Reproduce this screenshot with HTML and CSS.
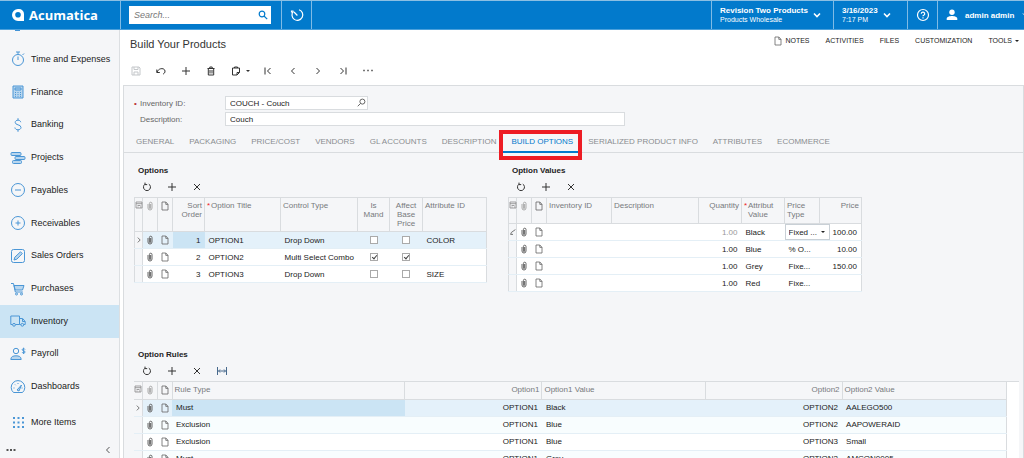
FILE: index.html
```
<!DOCTYPE html>
<html lang="en">
<head>
<meta charset="utf-8">
<title>Build Your Products</title>
<link rel="stylesheet" href="styles.css">
</head>
<body>
<svg class="sprite" aria-hidden="true">
  <symbol id="clip" viewBox="0 0 8 10"><path d="M2 3v4a2 2 0 0 0 4 0V2.500a1.300 1.300 0 0 0-2.600 0V7a.6.6 0 0 0 1.200 0V3"/></symbol>
  <symbol id="page" viewBox="0 0 8 10"><path d="M1 1h3.800L7 3.300V9H1zM4.800 1v2.400H7"/></symbol>
  <symbol id="files" viewBox="0 0 8 8"><path d="M1 1h6v6H1zM1 2.700h6M2.500 4.500h3M2.500 6h1M5 6h1"/></symbol>
  <symbol id="plus" viewBox="0 0 10 10"><path d="M5 1v8M1 5h8"/></symbol>
  <symbol id="cross" viewBox="0 0 10 10"><path d="M2 2l6 6M8 2l-6 6"/></symbol>
  <symbol id="refresh" viewBox="0 0 10 10"><path d="M3 2.200A3.500 3.500 0 1 0 6.800 2.100M3 .6v2h2.200"/></symbol>
  <symbol id="fit" viewBox="0 0 10 10"><path d="M.5 1v8M9.500 1v8M1.500 5h7M3 3.500L1.500 5 3 6.500M7 3.500L8.500 5 7 6.500"/></symbol>
  <symbol id="right" viewBox="0 0 10 10"><path d="M3.500 2l3 3-3 3"/></symbol>
  <symbol id="left" viewBox="0 0 10 10"><path d="M6.500 2l-3 3 3 3"/></symbol>
  <symbol id="down" viewBox="0 0 10 10"><path d="M2 3.500l3 3 3-3"/></symbol>
  <symbol id="lens" viewBox="0 0 10 10"><circle cx="4" cy="4" r="2.800"/><path d="M6 6l3.200 3.200"/></symbol>
</svg>

<header class="top">
  <a class="brand" href="#"><svg class="logo" viewBox="0 0 14 14"><path fill="#fff" fill-rule="evenodd" d="M7 1h1a5 5 0 0 1 5 5v7H7A6 6 0 0 1 7 1zM7 4a2.800 2.800 0 1 0 2.800 2.800A2.800 2.800 0 0 0 7 4z"/></svg>Acumatica</a>
  <div class="find"><input type="text" placeholder="Search..." aria-label="Search"><svg class="ic"><use href="#lens"/></svg></div>
  <button class="sq" aria-label="Recent"><svg viewBox="0 0 14 14"><path d="M3.500 3.200A5.400 5.400 0 1 0 9 1.800M4 4l3.400 3.500M1.500 4.500V3h2"/></svg></button>
  <span class="grow"></span>
  <button class="company"><span class="two"><b>Revision Two Products</b><span>Products Wholesale</span></span><svg class="ic"><use href="#down"/></svg></button>
  <button class="date"><span class="two"><b>3/16/2023</b><span>7:17 PM</span></span><svg class="ic"><use href="#down"/></svg></button>
  <button class="sq" aria-label="Help"><svg viewBox="0 0 14 14"><circle cx="7" cy="7" r="5.500"/><path d="M5.300 5.800a1.700 1.700 0 1 1 2.400 1.500q-.7.3-.7 1M7 9.300v1.100"/></svg></button>
  <button class="user"><svg viewBox="0 0 12 12"><circle cx="6" cy="3.300" r="2.700"/><path d="M.7 11V9.800C.7 7.800 3.500 7 6 7s5.300.8 5.300 2.800V11z"/></svg><b>admin admin</b><svg class="ic"><use href="#down"/></svg></button>
</header>

<div class="body">
<nav class="side">
  <i class="peek"></i>
  <div class="list">
    <a href="#"><svg viewBox="0 0 16 16"><circle cx="8" cy="9" r="5.500"/><path d="M8 9V5.500M8 3.500V1M6 1h4M12.500 4l1.500-1.500"/></svg>Time and Expenses</a>
    <a href="#"><svg viewBox="0 0 16 16"><path class="t" d="M3 2h10v12H3z"/><path d="M5 4h6v2H5zM5 8.500h1M7.500 8.500h1M10 8.500h1M5 10.500h1M7.500 10.500h1M10 10.500h1M5 12.300h1M7.500 12.300h1M10 12.300h1"/></svg>Finance</a>
    <a href="#"><svg viewBox="0 0 16 16"><path d="M10.800 5.200C10.500 3.800 9.300 3.200 8 3.200 6.400 3.200 5.200 4 5.200 5.400c0 3.200 5.800 1.700 5.800 5 0 1.500-1.300 2.400-3 2.400-1.600 0-2.900-.8-3.100-2.300M8 1.200v2M8 12.800v2"/></svg>Banking</a>
    <a href="#"><svg viewBox="0 0 16 16"><rect class="t" x="1" y="2.500" width="10" height="3" rx="1"/><rect class="t" x="5" y="6.500" width="10" height="3" rx="1"/><rect class="t" x="2.500" y="10.500" width="9" height="3" rx="1"/></svg>Projects</a>
    <a href="#"><svg viewBox="0 0 16 16"><circle cx="8" cy="8" r="6.500"/><path d="M5 8h6"/></svg>Payables</a>
    <a href="#"><svg viewBox="0 0 16 16"><circle cx="8" cy="8" r="6.500"/><path d="M5.500 8h5M8 5.500v5"/></svg>Receivables</a>
    <a href="#"><svg viewBox="0 0 16 16"><rect x="1.500" y="1.500" width="13" height="13" rx="2"/><path class="t" d="M4 12l.8-2.800L10.500 3.800l1.800 1.800L6.800 11.200z"/></svg>Sales Orders</a>
    <a href="#"><svg viewBox="0 0 16 16"><path class="t" d="M4 4.500h10L12.500 9H5.200z"/><path d="M1 2.500h2.500L5.300 11h7.500"/><circle cx="6.500" cy="13" r="1"/><circle cx="11.500" cy="13" r="1"/></svg>Purchases</a>
    <a href="#" class="on"><svg viewBox="0 0 16 16"><path d="M2.500 11.500H.8V3h8.700v8.500H5.500M9.500 5.500h3.200l2.500 3v3h-1.500M9.500 11.500h1.300M12.500 6v2.500H15"/><circle cx="4" cy="11.800" r="1.400"/><circle cx="12.300" cy="11.800" r="1.400"/></svg>Inventory</a>
    <a href="#"><svg viewBox="0 0 16 16"><circle cx="6" cy="5" r="2.700"/><path class="t" d="M.8 13.500c0-3 2.500-3.700 5.200-3.700s5.200.7 5.200 3.700z"/><path d="M15 3.500c-.5-1.200-2.800-1-2.800.2 0 1.500 2.900.8 2.900 2.300 0 1.300-2.500 1.500-3 .2M13.600 1.700v6.300"/></svg>Payroll</a>
    <a href="#"><svg viewBox="0 0 16 16"><path d="M3.500 13.500a6.800 6.800 0 1 1 9 0zM3.500 9h1M5 5.500l.7.7M8 4v1M12.500 9h-1"/><path class="t" d="M7 11l4.500-5L9 12z"/></svg>Dashboards</a>
  </div>
  <a href="#" class="more"><svg viewBox="0 0 16 16"><path class="dots" d="M3 3h2M7.500 3h2M12 3h2M3 7.500h2M7.500 7.500h2M12 7.500h2M3 12h2M7.500 12h2M12 12h2"/></svg>More Items</a>
  <div class="foot"><button aria-label="Menu options"><svg class="ic" viewBox="0 0 10 10"><path class="dots" d="M.5 5h2M4 5h2M7.500 5h2"/></svg></button><button aria-label="Collapse"><svg class="ic"><use href="#left"/></svg></button></div>
</nav>

<main>
  <div class="titlebar">
    <h1>Build Your Products</h1>
    <div class="links"><a href="#"><svg class="pg"><use href="#page"/></svg>NOTES</a><a href="#">ACTIVITIES</a><a href="#">FILES</a><a href="#">CUSTOMIZATION</a><a href="#">TOOLS<i class="caret"></i></a></div>
  </div>
  <div class="bar">
    <button disabled aria-label="Save"><svg class="ic" viewBox="0 0 10 10"><path d="M1 1h7l1 1v7H1zM3 1v2.500h4V1M3 9V6h4v3"/></svg></button>
    <button aria-label="Undo"><svg class="ic" viewBox="0 0 10 10"><path d="M.8 3.500v3h3M1 6.300C2.500 1.500 8.800 1.800 9 5c.1 1.600-.8 2.700-2 3"/></svg></button>
    <button aria-label="Add"><svg class="ic"><use href="#plus"/></svg></button>
    <button aria-label="Delete"><svg class="ic" viewBox="0 0 10 10"><path d="M1.500 2.500h7M3.800 2.200V1h2.400v1.200M2.300 2.500V9h5.400V2.500M4 4v3.500M6 4v3.500"/></svg></button>
    <button aria-label="Copy"><svg class="ic" viewBox="0 0 10 10"><path d="M1.500 2H8.500V6.500L6 9H1.500zM3.500 2V1h3v1M8.500 6.500H6V9"/></svg><i class="caret"></i></button>
    <span class="gap"></span>
    <button aria-label="First"><svg class="ic" viewBox="0 0 10 10"><path d="M2 1.500v7M7.500 2l-3 3 3 3"/></svg></button>
    <button aria-label="Previous"><svg class="ic"><use href="#left"/></svg></button>
    <button aria-label="Next"><svg class="ic"><use href="#right"/></svg></button>
    <button aria-label="Last"><svg class="ic" viewBox="0 0 10 10"><path d="M8 1.500v7M2.500 2l3 3-3 3"/></svg></button>
    <button aria-label="More"><svg class="ic" viewBox="0 0 10 10"><path class="dots" d="M0 4.500h2M4 4.500h2M8 4.500h2"/></svg></button>
  </div>

  <div class="panel">
    <form class="form">
      <label for="inv"><i class="req">•</i>Inventory ID:</label><span class="pick"><input id="inv" type="text" value="COUCH - Couch"><svg class="ic"><use href="#lens"/></svg></span>
      <label for="desc">Description:</label><input id="desc" type="text" value="Couch">
    </form>
    <div class="tabs">
      <button>GENERAL</button><button>PACKAGING</button><button>PRICE/COST</button><button>VENDORS</button><button>GL ACCOUNTS</button><button>DESCRIPTION</button><button class="on">BUILD OPTIONS</button><button>SERIALIZED PRODUCT INFO</button><button>ATTRIBUTES</button><button>ECOMMERCE</button>
    </div>

    <div class="pair">
      <section class="opts">
        <h2>Options</h2>
        <div class="tools"><button aria-label="Refresh"><svg class="ic"><use href="#refresh"/></svg></button><button aria-label="Add"><svg class="ic"><use href="#plus"/></svg></button><button aria-label="Delete"><svg class="ic"><use href="#cross"/></svg></button></div>
        <table>
          <colgroup><col class="c-sel"><col class="c-ic"><col class="c-ic"><col class="w32"><col class="w76"><col class="w77"><col class="w32"><col class="w33"><col></colgroup>
          <thead class="h3"><tr><th><svg class="fs"><use href="#files"/></svg></th><th><svg class="cl"><use href="#clip"/></svg></th><th><svg class="pg"><use href="#page"/></svg></th><th class="r">Sort<br>Order</th><th class="star">Option Title</th><th>Control Type</th><th class="m">Is<br>Mand</th><th class="m">Affect<br>Base<br>Price</th><th>Attribute ID</th></tr></thead>
          <tbody>
            <tr class="cur"><td><svg class="ar"><use href="#right"/></svg></td><td><svg class="cl"><use href="#clip"/></svg></td><td><svg class="pg"><use href="#page"/></svg></td><td class="r act">1</td><td>OPTION1</td><td>Drop Down</td><td class="m"><input type="checkbox" aria-label="Is mandatory"></td><td class="m"><input type="checkbox" aria-label="Affects base price"></td><td>COLOR</td></tr>
            <tr><td></td><td><svg class="cl"><use href="#clip"/></svg></td><td><svg class="pg"><use href="#page"/></svg></td><td class="r">2</td><td>OPTION2</td><td>Multi Select Combo</td><td class="m"><input type="checkbox" checked aria-label="Is mandatory"></td><td class="m"><input type="checkbox" checked aria-label="Affects base price"></td><td></td></tr>
            <tr><td></td><td><svg class="cl"><use href="#clip"/></svg></td><td><svg class="pg"><use href="#page"/></svg></td><td class="r">3</td><td>OPTION3</td><td>Drop Down</td><td class="m"><input type="checkbox" aria-label="Is mandatory"></td><td class="m"><input type="checkbox" aria-label="Affects base price"></td><td>SIZE</td></tr>
          </tbody>
        </table>
      </section>
      <section class="vals">
        <h2>Option Values</h2>
        <div class="tools"><button aria-label="Refresh"><svg class="ic"><use href="#refresh"/></svg></button><button aria-label="Add"><svg class="ic"><use href="#plus"/></svg></button><button aria-label="Delete"><svg class="ic"><use href="#cross"/></svg></button></div>
        <table>
          <colgroup><col class="c-sel"><col class="c-ic"><col class="c-ic"><col class="w65"><col class="w87"><col class="w43"><col class="w43"><col class="w35"><col></colgroup>
          <thead class="h2"><tr><th><svg class="fs"><use href="#files"/></svg></th><th><svg class="cl"><use href="#clip"/></svg></th><th><svg class="pg"><use href="#page"/></svg></th><th>Inventory ID</th><th>Description</th><th class="r">Quantity</th><th class="star">Attribut<br>Value</th><th>Price<br>Type</th><th class="r">Price</th></tr></thead>
          <tbody>
            <tr><td><svg class="ar" viewBox="0 0 10 10"><path d="M2 8l1-2.500L8 2M2 8h3"/></svg></td><td><svg class="cl"><use href="#clip"/></svg></td><td><svg class="pg"><use href="#page"/></svg></td><td></td><td></td><td class="r dim">1.00</td><td>Black</td><td class="edit"><span class="combo"><select aria-label="Price type"><option>Fixed ...</option></select><i class="caret"></i></span></td><td class="r">100.00</td></tr>
            <tr><td></td><td><svg class="cl"><use href="#clip"/></svg></td><td><svg class="pg"><use href="#page"/></svg></td><td></td><td></td><td class="r">1.00</td><td>Blue</td><td>% O...</td><td class="r">10.00</td></tr>
            <tr><td></td><td><svg class="cl"><use href="#clip"/></svg></td><td><svg class="pg"><use href="#page"/></svg></td><td></td><td></td><td class="r">1.00</td><td>Grey</td><td>Fixe...</td><td class="r">150.00</td></tr>
            <tr><td></td><td><svg class="cl"><use href="#clip"/></svg></td><td><svg class="pg"><use href="#page"/></svg></td><td></td><td></td><td class="r">1.00</td><td>Red</td><td>Fixe...</td><td></td></tr>
          </tbody>
        </table>
      </section>
    </div>

    <section class="rules">
      <h2>Option Rules</h2>
      <div class="tools"><button aria-label="Refresh"><svg class="ic"><use href="#refresh"/></svg></button><button aria-label="Add"><svg class="ic"><use href="#plus"/></svg></button><button aria-label="Delete"><svg class="ic"><use href="#cross"/></svg></button><button aria-label="Fit columns"><svg class="ic fit"><use href="#fit"/></svg></button></div>
      <div class="sheet">
        <table>
          <colgroup><col class="c-sel"><col class="c-ic"><col class="c-ic"><col class="p27"><col class="p16"><col class="p19"><col class="p16"><col></colgroup>
          <thead class="h1"><tr><th><svg class="fs"><use href="#files"/></svg></th><th><svg class="cl"><use href="#clip"/></svg></th><th><svg class="pg"><use href="#page"/></svg></th><th>Rule Type</th><th class="r">Option1</th><th>Option1 Value</th><th class="r">Option2</th><th>Option2 Value</th></tr></thead>
          <tbody>
            <tr class="cur"><td><svg class="ar"><use href="#right"/></svg></td><td><svg class="cl"><use href="#clip"/></svg></td><td><svg class="pg"><use href="#page"/></svg></td><td class="act">Must</td><td class="r">OPTION1</td><td>Black</td><td class="r">OPTION2</td><td>AALEGO500</td></tr>
            <tr class="alt"><td></td><td><svg class="cl"><use href="#clip"/></svg></td><td><svg class="pg"><use href="#page"/></svg></td><td>Exclusion</td><td class="r">OPTION1</td><td>Blue</td><td class="r">OPTION2</td><td>AAPOWERAID</td></tr>
            <tr><td></td><td><svg class="cl"><use href="#clip"/></svg></td><td><svg class="pg"><use href="#page"/></svg></td><td>Exclusion</td><td class="r">OPTION1</td><td>Blue</td><td class="r">OPTION3</td><td>Small</td></tr>
            <tr class="alt"><td></td><td><svg class="cl"><use href="#clip"/></svg></td><td><svg class="pg"><use href="#page"/></svg></td><td>Must</td><td class="r">OPTION1</td><td>Grey</td><td class="r">OPTION2</td><td>AMCON0005</td></tr>
          </tbody>
        </table>
      </div>
    </section>
  </div>
</main>
</div>
</body>
</html>
```
FILE: styles.css
```
:root {
  --blue: #027acc;
  --pane: #f5f6f8;
  --line: #d9dcdf;
  --small: 8px;
}
* { box-sizing: border-box; }
body {
  margin: 0;
  height: 100vh;
  overflow: hidden;
  display: flex;
  flex-direction: column;
  font: 8px/9px "Liberation Sans", Arial, sans-serif;
  font-size: var(--small);
  color: #222;
  background: #fff;
}
button, input, select { font: inherit; color: inherit; margin: 0; }
button { border: 0; background: none; padding: 0; }
a { color: inherit; text-decoration: none; }
svg { fill: none; stroke: currentColor; flex: none; display: block; }
.sprite { position: absolute; width: 0; height: 0; }
.ic { width: 10px; height: 10px; }
.dots { stroke-width: 2; }
.caret {
  display: inline-block;
  border: 2px solid transparent;
  border-top-color: currentColor;
  border-bottom: 0;
}

/* top bar */
.top {
  display: flex;
  height: 30px;
  flex: none;
  background: var(--blue);
  border-top: 1px solid #8bbfe3;
  border-bottom: 1px solid #4ba0db;
  color: #fff;
}
.top > * { border-left: 1px solid #7fbbe5; display: flex; align-items: center; flex: none; }
.top .brand { width: 120px; border-left: 0; padding-left: 11px; gap: 4px; font: 700 13px/20px "Open Sans", sans-serif; }
.logo { width: 14px; height: 14px; stroke: none; }
.find { padding: 0 10px 0 8px; width: 161px; position: relative; }
.find input { width: 100%; height: 18px; border: 0; padding: 0 5px; font-size: 9px; background: #fff; color: #333; }
.find input::placeholder { color: #777; font-style: italic; }
.find svg { position: absolute; right: 13px; color: var(--blue); stroke-width: 1.2; }
.top .sq { width: 30px; justify-content: center; }
.sq svg { width: 14px; height: 14px; stroke-width: 1.2; }
.top .grow { flex: 1; border-left-color: #7fbbe5; }
.two { display: flex; flex-direction: column; text-align: left; white-space: nowrap; }
.two span { font-size: 7px; }
.company, .date { padding-left: 8px; gap: 4px; }
.top .company { width: 122px; }
.top .date { width: 74px; }
.company svg, .date svg { stroke-width: 1.6; }
.top .user { width: 87px; padding-left: 8px; gap: 7px; white-space: nowrap; overflow: hidden; }
.user svg:first-child { width: 12px; height: 12px; fill: #fff; stroke: none; }

/* side menu */
.body { display: flex; flex: 1; min-height: 0; }
.side {
  width: 120px;
  flex: none;
  display: flex;
  flex-direction: column;
  background: var(--pane);
  border-right: 1px solid #dcdfe2;
  font-size: 9px;
}
.peek { height: 1px; width: 5px; margin: 0 0 12px 15px; background: #4293d6; }
.list { flex: 1; display: flex; flex-direction: column; }
.side a { display: flex; align-items: center; gap: 5px; padding-left: 10px; }
.list a { flex: 1; }
.side .on { background: #cbe4f4; }
.side a svg { width: 16px; height: 16px; color: #4a96d6; }
.side .t { fill: #b9d6ee; }
.more { height: 39px; }
.foot { display: flex; justify-content: space-between; height: 16px; padding: 0 6px; color: #555; }

/* screen heading */
main { flex: 1; min-width: 0; display: flex; flex-direction: column; padding-left: 3px; }
.titlebar { display: flex; justify-content: space-between; align-items: flex-start; height: 27px; padding: 5px 5px 0 7px; }
h1 { margin: 0; font-size: 11px; line-height: 18px; font-weight: 400; color: #333; }
.links { display: flex; gap: 16px; font-size: 7px; line-height: 12px; }
.links a { display: flex; align-items: center; gap: 3px; }
.pg { width: 8px; height: 10px; color: #666; stroke-width: .8; margin: 0 auto; }
.bar { display: flex; height: 28px; align-items: center; color: #333; }
.bar button { width: 25px; display: flex; align-items: center; justify-content: center; }
.bar button:disabled { color: #c4c7ca; }
.bar .caret { margin-left: 5px; margin-right: -9px; }
.bar .dots { stroke: #777; stroke-width: 1.5; }
.gap { width: 7px; }

.panel {
  flex: 1;
  min-height: 0;
  overflow: hidden;
  background: var(--pane);
  border: 1px solid var(--line);
  border-bottom: 0;
  padding-top: 10px;
}
.form { display: grid; grid-template-columns: 85px 400px; row-gap: 2px; padding-left: 16px; color: #222; align-items: center; }
.form label { position: relative; color: #666; }
.req { position: absolute; left: -6px; color: #b33; font-style: normal; }
.form input { width: 100%; height: 14px; padding: 0 4px; border: 1px solid var(--line); background: #fff; }
.pick { position: relative; width: 143px; display: block; height: 14px; }
.pick svg { position: absolute; right: 2px; top: 2px; color: #555; transform: scaleX(-1); }

.pick svg { width: 9px; height: 9px; }
.tabs { display: flex; gap: 15px; height: 22px; margin-top: 5px; padding-left: 12px; border-bottom: 1px solid var(--line); color: #8a8d90; white-space: nowrap; }
.tabs button { position: relative; padding-bottom: 1px; }
.tabs .on { color: var(--blue); }
.tabs .on::before { content: ""; position: absolute; left: -8px; right: -5px; bottom: -1px; height: 2px; background: var(--blue); }
.tabs .on::after { content: ""; position: absolute; left: -12px; right: -9px; top: -1px; bottom: -8px; border: 4px solid #ed1c24; }

/* grids */
.pair { display: flex; gap: 21px; padding: 12px 0 0 10px; min-height: 196px; }
.opts { width: 353px; }
.vals { width: 354px; }
h2 { margin: 0; padding-left: 4px; font-size: var(--small); line-height: 12px; }
.tools { display: flex; height: 20px; color: #333; }
.tools button { width: 25px; display: flex; align-items: center; justify-content: center; }
.tools .fit { color: #47698c; }
table { border-collapse: collapse; table-layout: fixed; width: 100%; border: 1px solid var(--line); }
th { font-weight: 400; text-align: left; vertical-align: top; color: #777a7d; padding: 3px 2px 0; border-right: 1px solid var(--line); border-bottom: 1px solid var(--line); white-space: nowrap; }
.h3 { height: 34px; }
.h2 { height: 26px; }
.h1 { height: 17px; }
tr { background: #fff; }
thead tr { background: var(--pane); }
tbody tr { height: 17px; }
td { padding: 0 4px; border-bottom: 1px solid #e4eff6; white-space: nowrap; }
td:first-child { background: var(--pane); border-right: 1px solid var(--line); }
th:nth-child(-n+3), td:nth-child(-n+3) { padding-left: 0; padding-right: 0; }
.r { text-align: right; }
.m { text-align: center; }
th.star { position: relative; padding-left: 6px; }
.star::before { content: "*"; position: absolute; left: 2px; color: #e22; }
.cur { background: #e4f1fa; }
.alt { background: #f8fdfe; }
.act { background: #cbe4f4; }
.dim { color: #999; }
.cl { width: 8px; height: 10px; margin: 0 auto; color: #666; }
th .cl { color: #aaa; }
.fs { width: 8px; height: 8px; color: #888; stroke-width: .8; }
.ar { width: 8px; height: 8px; color: #555; }
.c-sel { width: 8px; }
.c-ic { width: 15px; }
.w32 { width: 32px; }
.w33 { width: 33px; }
.w35 { width: 35px; }
.w43 { width: 43px; }
.w65 { width: 65px; }
.w76 { width: 76px; }
.w77 { width: 77px; }
.w87 { width: 87px; }
.p27 { width: 26.7%; }
.p16 { width: 15.7%; }
.p19 { width: 18.7%; }
input[type="checkbox"] { appearance: none; width: 8px; height: 8px; border: 1px solid #aaa; background: #fff; display: inline-block; vertical-align: middle; position: relative; }
input[type="checkbox"]:checked::before { content: ""; position: absolute; left: 2px; top: 0; width: 2px; height: 4px; border: solid #444; border-width: 0 1px 1px 0; transform: rotate(40deg); }
td.edit { padding: 0; }
.combo { display: block; position: relative; width: 45px; height: 16px; }
.combo select { appearance: none; width: 100%; height: 100%; border: 1px solid #c9d0d6; background: #fff; padding: 0 3px; }
.combo .caret { position: absolute; right: 5px; top: 7px; }
.sheet { margin: 0 4px 0 0; padding-right: 12px; background: #fff; border-top: 1px solid var(--line); }
.sheet table { border-top-width: 0; border-left: 0; }
.rules { padding-left: 10px; }
```
